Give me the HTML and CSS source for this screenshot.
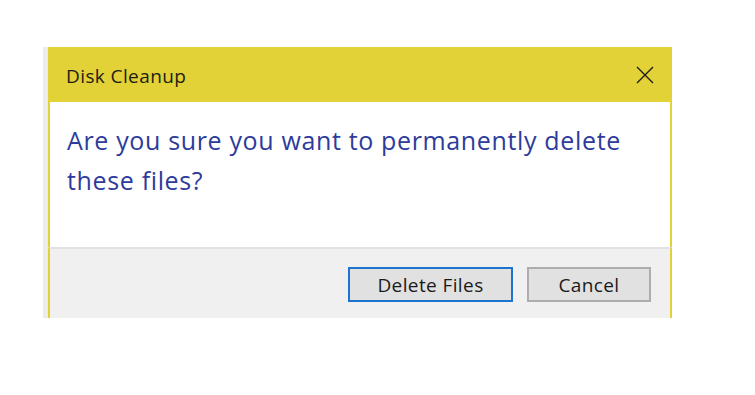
FILE: index.html
```html
<!DOCTYPE html>
<html lang="en">
	<head>
		<meta charset="UTF-8" />
		<title>Disk Cleanup</title>
		<link rel="stylesheet" href="styles.css">
	</head>
	<body>
		<div class="dialog">
			<div class="titlebar">
				<span class="title">Disk Cleanup</span>
				<svg class="close" width="18" height="18" viewBox="0 0 18 18">
					<path d="M1 1 L17 17 M17 1 L1 17" stroke="#1e1e1e" stroke-width="1.4" fill="none" />
				</svg>
			</div>
			<div class="content">
				<p class="message">
					Are you sure you want to permanently delete<br>
					these files?
				</p>
			</div>
			<div class="footer">
				<button class="btn default">Delete Files</button>
				<button class="btn">Cancel</button>
			</div>
		</div>
	</body>
</html>
```

FILE: styles.css
```css
* {
	margin: 0;
	padding: 0;
	box-sizing: border-box;
}

body {
	font-family: 'Open Sans', 'Noto Sans', sans-serif;
	background: #ffffff;
	width: 755px;
	height: 395px;
	overflow: hidden;
}

.dialog {
	width: 624px;
	margin: 47px 0 0 48px;
	box-shadow: -5px 0 0 #ececec;
}

.titlebar {
	height: 55px;
	background: #e2d137;
	display: flex;
	align-items: center;
	justify-content: space-between;
	padding: 2px 18px 0 18px;
}

.title {
	font-size: 19px;
	color: #1d1d12;
	letter-spacing: 0.4px;
}

.close {
	margin-top: -2px;
}

.content {
	height: 145px;
	background: #ffffff;
	border-left: 2px solid #e2d137;
	border-right: 2px solid #e2d137;
	padding: 18px 17px 0;
}

.message {
	font-size: 25px;
	line-height: 40px;
	color: #2d3b9c;
	letter-spacing: 0.65px;
}

.footer {
	height: 71px;
	background: #f0f0f0;
	border-top: 2px solid #e2e2e2;
	border-left: 2px solid #e2d137;
	border-right: 2px solid #e2d137;
	display: flex;
	justify-content: flex-end;
	align-items: flex-start;
	gap: 14px;
	padding: 18px 19px 0 0;
}

.btn {
	font-family: 'Open Sans', 'Noto Sans', sans-serif;
	font-size: 19px;
	color: #1a1a1a;
	height: 35px;
	width: 124px;
	background: #e1e1e1;
	border: 2px solid #adadad;
	letter-spacing: 0.4px;
}

.btn.default {
	width: 165px;
	border-color: #1f73d0;
}
```
